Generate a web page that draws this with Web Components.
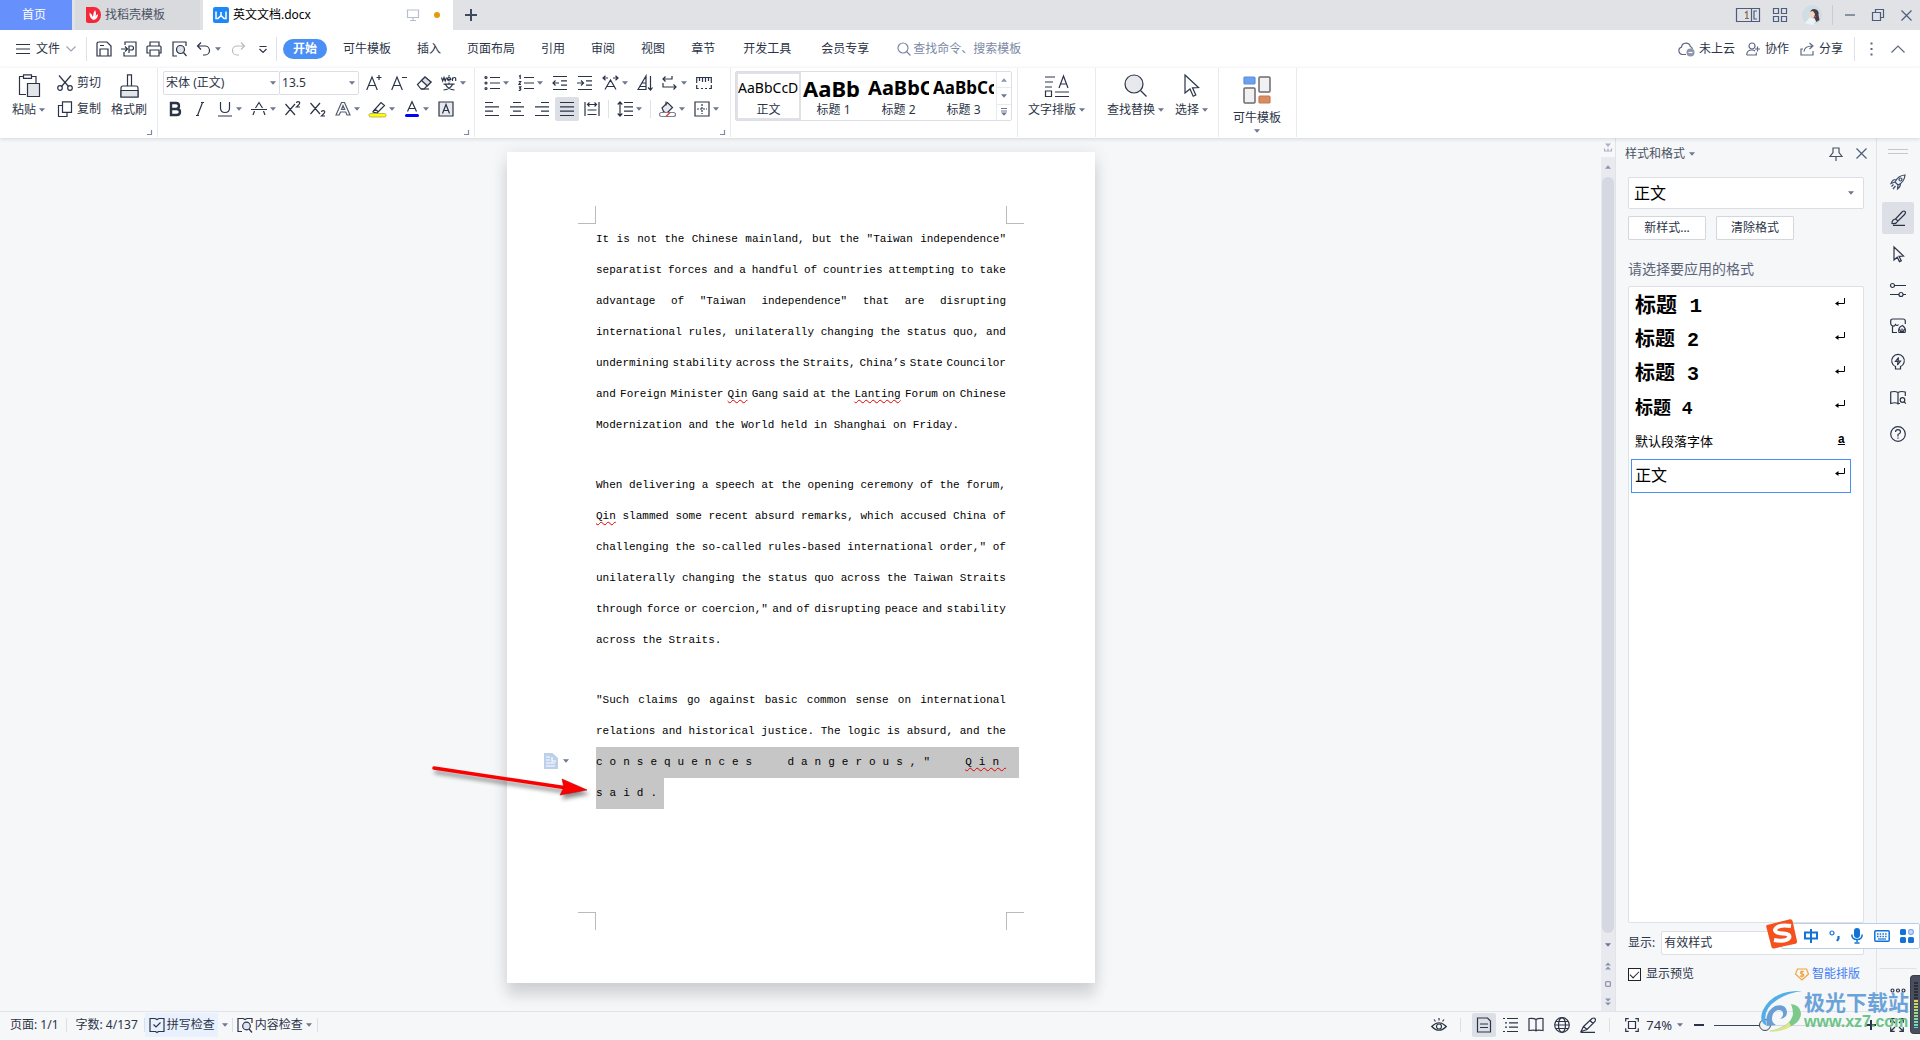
<!DOCTYPE html>
<html lang="zh-CN">
<head>
<meta charset="utf-8">
<title>英文文档.docx</title>
<style>
html, body { margin: 0; height: 100%; overflow: hidden; }
body { font: 12px/16px "Noto Sans", "Noto Sans CJK SC", sans-serif; color: #2b3447; background: #f6f7f9; }
</style>
</head>
<body>
<writer-app></writer-app>
<script>
const BASE = `
*{box-sizing:border-box}
button,select,input{font:inherit;color:inherit;margin:0}
button{background:none;border:0;padding:0;display:flex;align-items:center;white-space:nowrap;cursor:pointer}
select{appearance:none;background:none;border:0;outline:0}
a{color:inherit;text-decoration:none}
`;
function define(name, css, html, setup) {
  const tpl = document.createElement('template');
  tpl.innerHTML = `<style>${BASE}${css}</style>${html}`;
  customElements.define(name, class extends HTMLElement {
    constructor() { super(); this.attachShadow({ mode: 'open' }); }
    connectedCallback() {
      if (this.shadowRoot.childNodes.length) return;
      this.shadowRoot.append(tpl.content.cloneNode(true));
      if (setup) setup.call(this, this.shadowRoot);
    }
  });
}

/* name: [width, height, svg body] */
const ICONS = {
  caret: [6, 4, '<path d="M0 .3h6L3 3.700z" fill="#6b7790" stroke="none"/>'],
  caretUp: [6, 4, '<path d="M0 3.700h6L3 .3z" fill="#8a94ab" stroke="none"/>'],
  menu: [14, 12, '<path d="M0 1.500h14M0 6h14M0 10.500h14"/>'],
  chevDown: [10, 6, '<path d="M.5.5L5 5 9.500.5" stroke="#9aa3b4"/>'],
  chevUp: [14, 8, '<path d="M.5 7.500L7 1l6.500 6.500" stroke="#5d6880"/>'],
  more: [3, 14, '<path d="M.5 1.500h2M.5 7h2M.5 12.500h2" stroke="#5d6880" stroke-width="2"/>'],
  save: [16, 16, '<path d="M1 3q0-2 2-2h8l4 4v10H1zM4 15V8h8v7M4 4.500h4"/>'],
  exportPdf: [16, 16, '<path d="M4 4V1h11v14H3v-4M0 8h6M4 5.500L6.500 8 4 10.500M8 12V5h2.500q2 0 2 2t-2 2H8"/>'],
  print: [16, 16, '<path d="M4 5V1h9v4M3 12H1V6q0-1 1-1h12q1 0 1 1v6h-2M4 9h9v6H4z"/>'],
  preview: [16, 16, '<path d="M15 5V1H2v14h4"/><circle cx="9.500" cy="8.500" r="4" fill="#dfe3ea"/><path d="M12.500 11.500L15.500 15"/>'],
  undo: [16, 16, '<path d="M5 1.500L1.500 5 5 8.500M1.500 5h7.500a4.500 4.500 0 0 1 0 9H7"/>'],
  redo: [16, 16, '<path d="M11 1.500L14.500 5 11 8.500M14.500 5H7a4.500 4.500 0 0 0 0 9h2" stroke="#b6bac3"/>'],
  quick: [16, 16, '<path d="M4.500 5.500h7M4.500 8L8 11.500 11.500 8"/>'],
  search: [14, 14, '<circle cx="6" cy="6" r="5" stroke="#7c88a6"/><path d="M9.500 9.500L13.500 13.500" stroke="#7c88a6"/>'],
  cloud: [17, 15, '<path d="M8 12.500H4.500a3.800 3.800 0 0 1-1-7.400 4.500 4.500 0 0 1 8.800-.6 3 3 0 0 1 2 2.500" stroke="#5d6880"/><circle cx="12.500" cy="10.500" r="4" fill="#8d96ab" stroke="none"/><path d="M10.500 10.500h4" stroke="#fff"/>'],
  person: [15, 14, '<circle cx="6" cy="4" r="3" stroke="#5d6880"/><path d="M.7 13q0-5 5.300-5 2 0 3 1M.7 13h9.600v-2.500M11.500 4.500v5M9 7h5" stroke="#5d6880"/>'],
  share: [15, 14, '<path d="M3 7H1v6h12V9M4 9.500q.5-5.500 8-5.500M9.500 1L13 4 9.500 7" stroke="#5d6880"/>'],
  plus: [12, 12, '<path d="M6 0v12M0 6h12" stroke="#3f4a60" stroke-width="2"/>'],
  monitor: [12, 12, '<path d="M.5 1h11v7.500H.5zM6 8.500v3M3 11.500h6" stroke="#b7bed0"/>'],
  winNum: [24, 14, '<path d="M.5.5h23v13H.5zM15.500.5v13M21 3h-3v8h3" stroke="#4c5c7c"/><path d="M9 5l2-1.500v7M9 10.500h4" stroke="#8a6a4a"/>'],
  grid4: [14, 14, '<path d="M.5.5h5v5h-5zM8.500.5h5v5h-5zM.5 8.500h5v5h-5zM8.500 8.500h5v5h-5z" stroke="#4c5c7c"/>'],
  avatar: [20, 20, '<circle cx="10" cy="10" r="10" fill="#cfdde4" stroke="none"/><path d="M8 9q0-5 4.500-5 5 1 4 6l1 5-3 2-2-4-4-1z" fill="#4b3a42" stroke="none"/><path d="M7 8q1-2 4-2l2 3q0 3-2 4l-4-1z" fill="#f0d5c8" stroke="none"/><path d="M3 18l5-6 5 3-1 5q-5 0-9-2z" fill="#eaf4f6" stroke="none"/><path d="M12 11l2 1" stroke="#c4574c"/>'],
  min: [10, 10, '<path d="M0 5h10" stroke="#4c5c7c"/>'],
  restore: [12, 12, '<path d="M.5 3.500h8v8h-8zM3.500 3.500v-3h8v8h-3" stroke="#4c5c7c"/>'],
  close: [11, 11, '<path d="M.5.5l10 10M10.500.5l-10 10" stroke="#4c5c7c"/>'],
  flame: [15, 16, '<path d="M0 0h8a7 8 0 0 1 0 16H2q-2 0-2-2z" fill="#f5283a" stroke="none"/><path d="M7.500 13Q3 11 3.500 5.500 6 7 7 10 7 6 9 3q2 4 0 7 1-2 3-3 0 5-4.500 6z" fill="#fff" stroke="none"/>'],
  wps: [16, 16, '<rect width="16" height="16" rx="2" fill="#1e88f7" stroke="none"/><path d="M3 4.500v7h2L8 8.500l3 3h2v-7M8 5v4" stroke="#fff" stroke-width="1.500"/>'],
  paste: [22, 24, '<path d="M8 20.500H1.500v-18H5M14 2.500h4V9"/><path d="M5.500.8h8v3.500h-8z"/><path d="M9.500 9.500h12v13h-12z" fill="#e2e5ea"/>'],
  cut: [16, 16, '<path d="M2 .5l9.500 11M14 .5L4.500 11.500"/><circle cx="3" cy="13" r="2.300"/><circle cx="13" cy="13" r="2.300"/>'],
  copy: [16, 16, '<path d="M5.500.8h9v10.500h-9z"/><path d="M5.500 4.500h-4v11h8.500v-4"/>'],
  brush: [19, 24, '<path d="M7.500 12V.8h4V12M1 23V14q0-2 2-2h13q2 0 2 2v9z"/><path d="M1 16.500h17V23H1z" fill="#e2e5ea"/>'],
  grow: [16, 16, '<path d="M.7 15L6 2l5.300 13M2.500 10.500h7M13 0v5M10.500 2.500h5"/>'],
  shrink: [16, 16, '<path d="M.7 15L6 2l5.300 13M2.500 10.500h7M11 2.500h5"/>'],
  eraser: [16, 16, '<path d="M1.500 9.500L9 2l6 5-7 7H5z"/><path d="M5.500 5.500L9 2l6 5-3.800 3.800z" fill="#dcdfe5"/><path d="M5 14h8"/>'],
  sup: [16, 16, '<path d="M.5 3l9.500 11M10 3L.5 14M11.500 2q0-1.300 1.600-1.300T14.700 2q0 1-3.200 4H15"/>'],
  sub: [16, 16, '<path d="M.5 2L10 13M10 2L.5 13M11.500 11q0-1.300 1.600-1.300T14.700 11q0 1-3.200 4H15"/>'],
  pinyin: [16, 16, '<path d="M.5 2.500L1.700 6 3 2.500 4.200 6 5.500 2.500M6.500 4.300h3.300Q9.600 2.500 8 2.500T6.500 4.300Q6.700 6 9.500 6M8.500.3l-1 1.200M11.500 6V2.500M11.500 3.500q3-2 3.200 0V6M2.500 9.200h11M8 7.500v1.700M4.500 9.500Q7 14.500 13.500 15M11.500 9.500Q9 14.500 2.500 15"/>'],
  bold: [16, 16, '<path d="M4 2h5q3 0 3 3t-3 3H4zM4 8h5.500q3.500 0 3.500 3t-3.500 3H4z" stroke-width="2.400"/>'],
  italic: [16, 16, '<path d="M9 1.500h3M4 14.500h3M10.500 1.500l-5 13"/>'],
  under: [16, 16, '<path d="M3.500 1v6q0 4.500 4.500 4.500T12.500 7V1M1 15h14"/>'],
  strike: [16, 16, '<path d="M4.500 7L8 1.500 11.500 7M3.500 10L2 14M12.500 10l1.500 4M0 8.500h16"/>'],
  outlineA: [16, 16, '<path d="M1 14L6.500 1.500h3L15 14h-3l-1.300-3H5.500L4.200 14zM6.500 8.500h3.200L8 4.500z" stroke="#555d6d"/>'],
  marker: [17, 16, '<path d="M4 10.500L12 1.500l3.500 3L8 12 4 11zM6 8l3.500 3"/><rect x="0" y="12.500" width="17" height="3.500" rx="1.500" fill="#ffff00" stroke="#8b8b4d" stroke-width=".6"/>'],
  colorA: [16, 16, '<path d="M3.500 10.500L8 .8l4.500 9.700M5 7.500h6"/><rect x="1" y="13" width="14" height="3" rx="1.500" fill="#0000ff" stroke="none"/>'],
  boxA: [16, 16, '<path d="M1 1h14v14H1z" fill="#e7e9ed"/><path d="M4.500 12.500L8 3.500l3.500 9M5.500 9.500h5"/>'],
  bullets: [16, 16, '<path d="M6 2.500h10M6 8h10M6 13.500h10"/><circle cx="2" cy="2.500" r="1"/><circle cx="2" cy="8" r="1"/><circle cx="2" cy="13.500" r="1"/>'],
  numbers: [16, 16, '<path d="M6 2.500h10M6 8h10M6 13.500h10M1 1.200L2.200.5V4M.7 6.500h2L1 9.300h2M.8 11.800h2L1.800 13.300l1 .8-.8 1.200H.7"/>'],
  outdent: [16, 16, '<path d="M1 1.500h14M9 5.800h6M9 10.200h6M1 14.500h14M1 8h6M3.500 5.500L1 8l2.500 2.500"/>'],
  indent: [16, 16, '<path d="M1 1.500h14M9 5.800h6M9 10.200h6M1 14.500h14M0 8h6M4 5.500L6.500 8 4 10.500"/>'],
  scale: [17, 16, '<path d="M3 14.500L8.500 5l5.500 9.500M5 11.500h7M1 3h5M3.500.7L1 3l2.500 2.300M11 3h5M13.500.7L16 3l-2.500 2.300"/>'],
  sort: [16, 16, '<path d="M1 14.500L9 1v13.500zM5 8h4M3 11.500h6M13.500 1v14M11 12.500l2.500 2.500 2-2.500"/>'],
  wrap: [16, 16, '<path d="M10 1v3H1M3.500 1.500L1 4l2.500 2.500M1 8v4h13M11.500 9.500L14 12l-2.500 2.500"/>'],
  ruler: [16, 16, '<path d="M.7 8V2.500h14.600V8M3.500 3v3M6.500 3v4M9.500 3v4M12.500 3v3M.7 10v3.500h2M5 13.500h2M9 13.500h2M13 13.500h2.300V10"/>'],
  alignL: [16, 16, '<path d="M1 1.500h8M1 5.800h14M1 10.200h8M1 14.500h14"/>'],
  alignC: [16, 16, '<path d="M4 1.500h8M1 5.800h14M4 10.200h8M1 14.500h14"/>'],
  alignR: [16, 16, '<path d="M7 1.500h8M1 5.800h14M7 10.200h8M1 14.500h14"/>'],
  alignJ: [16, 16, '<path d="M1 1.500h14M1 5.800h14M1 10.200h14M1 14.500h14"/>'],
  alignD: [16, 16, '<path d="M1 1v14M15 1v14M4 3.500h8M5.500 1.500L3.500 3.500l2 2M10.500 1.500l2 2-2 2M3.500 9h9M3.500 13.500h9"/>'],
  spacing: [16, 16, '<path d="M7 1.500h9M7 5.800h9M7 10.200h9M7 14.500h9M3 1v14M.7 3.500L3 1l2.300 2.500M.7 12.500L3 15l2.300-2.500"/>'],
  bucket: [17, 16, '<path d="M3 7l5.500-5.500 5 5-5 5q-2 1-4-1z" fill="#e7e9ed"/><path d="M7 .5v4"/><rect x=".5" y="11.500" width="16" height="4" rx="2" fill="#fff" stroke="#7a8192"/><path d="M7 15.500l4-4" stroke="#e04040" stroke-width="1.500"/>'],
  border: [16, 16, '<path d="M1 1h14v14H1z"/><path d="M8 3v10M3 8h10" stroke-dasharray="2 1"/>'],
  typeset: [26, 24, '<path d="M1 3h10M1 8h8M1 13h7M15 14l4.500-12L24 14M16.500 10h6M11 18h14M11 22.500h14M1.500 17h6v5.500h-6z"/>'],
  find: [24, 24, '<circle cx="10" cy="10" r="9" fill="#e7e9ed"/><path d="M16.500 16.500l6 6"/>'],
  arrow: [16, 24, '<path d="M1 1l13.500 12.500-6 .3 3.300 7.200-2.600 1.300L6 15l-5 4z"/>'],
  tiles: [28, 28, '<rect x="1" y="1" width="11" height="7" rx="1" fill="#6aa0ee" stroke="#5a8fdc"/><rect x="16" y="1" width="11" height="15" rx="1" fill="#f1f1f2" stroke="#6b6b6e" stroke-width="1.500"/><rect x="1" y="12" width="11" height="15" rx="1" fill="#f1f1f2" stroke="#6b6b6e" stroke-width="1.500"/><rect x="16" y="20" width="11" height="7" rx="1" fill="#d88c62" stroke="#c57850"/>'],
  corner: [5, 5, '<path d="M4.500 0v4.500H0" stroke="#7c88a6"/>'],
  stack: [6, 8, '<path d="M0 .5h6M0 3h6" stroke="#6b7790"/><path d="M0 4.500h6L3 7.700z" fill="#6b7790" stroke="none"/>'],
  pin: [14, 14, '<path d="M4 1h6v4.500l3 4H1l3-4zM7 9.500V14"/>'],
  handle: [20, 5, '<path d="M0 .5h20M0 4.500h20" stroke="#c3c7d0"/>'],
  rocket: [16, 16, '<path d="M5 8Q8 1.500 15 1q-.5 7-7 10L5 8zM5.500 5.500Q2.500 5.500 1 9.500L5 8M10.500 9.500Q10.500 13 7.500 15L8 11M3.500 10.500l-2 2M5.500 12L3 15" stroke="#3f4d6b"/><circle cx="10.500" cy="5.500" r="1.500" stroke="#3f4d6b"/>'],
  pen: [16, 16, '<path d="M5.500 9L12.500 1.500q1.500-1 2.500 0t0 2.500L8 11zM5.500 9Q2 9.500 2 13.500q4 1 6-2.500M3 15.300h12"/>'],
  pointer: [16, 16, '<path d="M4 1l9.500 9-4.500.3 2.300 4.400-1.800.9-2.300-4.400L4 14z"/>'],
  sliders: [16, 16, '<circle cx="2.500" cy="3.500" r="2"/><path d="M4.500 3.500H16M0 12.500h9M13 12.500h3"/><circle cx="11" cy="12.500" r="2"/>'],
  store: [16, 16, '<path d="M7 14.500H2.500V8Q.7 7 .7 5.500V3Q.7 1 3 1h10q2.300 0 2.300 2v3M2.500 8q2 .5 3-1.500 1.500 2 3 0M9 14.500q-1.500-5 3.500-7 4 3 2.500 7z"/><path d="M12 14V10.500M9.500 11q1 3 2.500 3.500M14.500 11q-1 3-2.500 3.500"/>'],
  bulb: [16, 16, '<path d="M5.500 12.500A6.300 6.300 0 1 1 10.500 12.500V15h-5zM8.500 3.500L5.500 7.500H8L7.500 11l3-4H8z"/>'],
  bookSearch: [16, 16, '<path d="M8 2.500v12M8 13.500Q5 12 .7 13.500V2Q5 .8 8 2.500 11 .8 15.300 2v4M8 13.500h2"/><circle cx="12.500" cy="10" r="2.300"/><path d="M14 11.700l1.800 2"/>'],
  help: [16, 16, '<circle cx="8" cy="8" r="7.300"/><path d="M5.500 6Q5.500 3.700 8 3.700T10.500 6Q10.500 7.300 8 8.500v2M8 11.500v1.300"/>'],
  dots: [16, 5, '<circle cx="2.500" cy="2.500" r="1.500"/><circle cx="8" cy="2.500" r="1.500"/><circle cx="13.500" cy="2.500" r="1.500"/>'],
  ret: [10, 9, '<path d="M9.500 0v5.500H2" stroke="#000" stroke-width="1"/><path d="M3.500 3v5L0 5.500z" fill="#000" stroke="none"/>'],
  badge: [14, 14, '<path d="M2.500 2h9l2 5-6.500 6L.5 7z" stroke="#f0a63c"/><path d="M9 4.500H6q-1 1.300 0 2l2.500.7q.8 1.300-.5 2H5M7 3.500v7" stroke="#f0a63c"/>'],
  spell: [16, 16, '<path d="M6 1.500H1v13h5.500l1.500 1 1.500-1H15v-13h-5l-2 1zM4.500 7.500L7 10l4.500-4.500"/>'],
  content: [16, 16, '<path d="M4 14.500H1v-13h5l2 1 2-1h5V6"/><circle cx="9.500" cy="9" r="3.800" fill="#dfe3ea"/><path d="M12 12l3 3.500M4 14.500h1"/>'],
  eye: [16, 16, '<path d="M.7 9.500Q8 2 15.300 9.500 8 17 .7 9.500zM8 1v2.500M3 2.500L4.500 4.500M13 2.500L11.500 4.500"/><circle cx="8" cy="9.500" r="2.500"/>'],
  pageView: [16, 16, '<path d="M1.500 1h10l3 3v11h-13zM4 7h8M4 10.500h8"/>'],
  outline: [16, 16, '<path d="M1 1.500h2M5 1.500h11M3 5.800h2M7 5.800h9M3 10.200h2M7 10.200h9M1 14.500h2M5 14.500h11"/>'],
  book: [16, 16, '<path d="M8 2v12.500M8 13.500Q7 12.800 1 13.500v-12Q6 1 8 2.500 10 1 15 1.500v12Q9 12.800 8 13.500"/>'],
  globe: [16, 16, '<circle cx="8" cy="8" r="7.300"/><ellipse cx="8" cy="8" rx="3.500" ry="7.300"/><path d="M1 8h14M2 4.500h12M2 11.500h12"/>'],
  quill: [16, 16, '<path d="M3.500 9.500L12 1.500q2-1 3 0t0 3L7 12.500zM3.500 9.500L1 14.500l6-2M10 3.500L13 6.500M1 15.300h14"/>'],
  fit: [14, 14, '<path d="M.7 3.500V.7h3M10.300.7h3v3M13.300 10.300v3h-3M3.700 13.300h-3v-3M3.500 3.500h7v7h-7z"/>'],
  minus: [10, 10, '<path d="M0 5h10" stroke-width="2"/>'],
  plusS: [10, 10, '<path d="M0 5h10M5 0v10" stroke-width="2"/>'],
  full: [14, 14, '<path d="M.7 4.500V.7h4M9.300.7h4v4M13.300 9.300v4h-4M4.700 13.300h-4v-4M1 1l4 4M13 1L9 5M1 13l4-4M13 13L9 9"/>'],
  pasteTag: [14, 16, '<path d="M0 0h8.500L14 5v11H0z" fill="#bccfeb" stroke="none"/><path d="M2 4h4M2 7h4M8 4v4h4M2 10h9M2 13h9" stroke="#fff"/>'],
  pageTop: [8, 9, '<path d="M1 .5h6L4 4z" fill="#aab1c2" stroke="none"/><path d="M0 8h8M.5 5.500v2M7.500 5.500v2M4 5.500v2" stroke="#aab1c2"/>'],
  dblUp: [6, 8, '<path d="M0 3.500h6L3 .5zM0 7.500h6L3 4.500z" fill="#8a94ab" stroke="none"/>'],
  dblDown: [6, 8, '<path d="M0 .5h6L3 3.500zM0 4.500h6L3 7.500z" fill="#8a94ab" stroke="none"/>'],
  ring: [6, 6, '<rect x=".6" y=".6" width="4.800" height="4.800" rx="1" stroke="#8a94ab"/>'],
  sogou: [32, 30, '<path d="M1 6L24 .3q2-.3 2.500 1.500L31 22q.5 2-1.500 2.700L8 29.500q-2 .3-2.500-1.500L.3 8Q0 6.500 1 6z" fill="#f4511e" stroke="none"/><path d="M25 7Q11 5 9 11q0 3 8 3.500t6 4.500Q20 23 8 21" stroke="#fff" stroke-width="4"/>'],
  zhong: [14, 14, '<path d="M1 3.500h12v6H1zM7 0v14" stroke="#1272d6" stroke-width="2"/>'],
  punct: [12, 12, '<circle cx="3" cy="3" r="2" stroke="#1272d6"/><path d="M9.500 6v2.500L8 11" stroke="#1272d6" stroke-width="2.200"/>'],
  mic: [12, 16, '<rect x="3" y="0" width="6" height="10" rx="3" fill="#1272d6" stroke="none"/><path d="M.8 6.500q0 5 5.200 5t5.200-5M6 11.500V14M3.500 15h5" stroke="#1272d6" stroke-width="1.500"/>'],
  keys: [16, 12, '<rect x=".8" y=".8" width="14.400" height="10.400" rx="1" stroke="#1272d6" stroke-width="1.500"/><path d="M3 4h10M3 6.500h10" stroke="#1272d6" stroke-width="1.500" stroke-dasharray="1.500 1.200"/><path d="M4 9h8" stroke="#1272d6"/>'],
  apps: [14, 14, '<rect width="6" height="6" rx="1.500" fill="#1272d6" stroke="none"/><rect x="8.700" y=".7" width="4.600" height="4.600" rx="1.500" fill="#cdd9f6" stroke="#7aa5ea"/><rect y="8" width="6" height="6" rx="1.500" fill="#1272d6" stroke="none"/><rect x="8" y="8" width="6" height="6" rx="1.500" fill="#1272d6" stroke="none"/>'],
  swirl: [42, 42, '<path d="M41 1Q12 0 2 20-3 32 6 36 0 20 16 10 26 3 41 1z" fill="#54aee6" stroke="none"/><path d="M6 36Q3 22 14 16q11-3 12 6 0 6-7 7 5-4 2-8-5-3-9 3-3 8 3 11z" fill="#6a9fd6" stroke="none"/><path d="M30 14q9 1 10 9 0 10-14 15-10 4-18 3 22-4 24-17 0-5-2-10z" fill="#7cc98c" stroke="none"/><path d="M8 41q14-2 20-9l2 4Q20 43 8 41z" fill="#dfe58a" stroke="none"/>'],
  redArrow: [160, 36, '<g style="filter:drop-shadow(2px 4px 2px rgba(0,0,0,.45))"><path d="M2 3L132 22.500" stroke="#fa0000" stroke-width="3.500" stroke-linecap="round"/><path d="M130 14L155 25 128 30 132 22.500z" fill="#fa0000" stroke="#c80000" stroke-width=".6"/></g>'],
};
define('ui-icon', ':host{display:inline-flex;flex:none}svg{display:block;overflow:visible}', '', function (root) {
  const [w, h, body] = ICONS[this.getAttribute('name')];
  root.innerHTML += `<svg width="${w}" height="${h}" viewBox="0 0 ${w} ${h}" fill="none" stroke="currentColor" stroke-width="1.200" aria-hidden="true">${body}</svg>`;
});

/* small ribbon button: icon, optional label in the slot, optional caret */
define('tool-btn', `
:host{display:block}
button{gap:3px;height:24px}
:host([wide]) button{gap:4px}
:host([on]) button{background:#dce0e6;margin:0 -4px;padding:0 4px;border-radius:2px}
`, '<button type="button"></button>', function (root) {
  const b = root.querySelector('button');
  b.setAttribute('aria-label', this.getAttribute('icon'));
  b.innerHTML = `<ui-icon name="${this.getAttribute('icon')}"></ui-icon>` +
    (this.textContent.trim() ? '<slot></slot>' : '') + (this.hasAttribute('menu') ? '<ui-icon name="caret"></ui-icon>' : '');
  if (this.textContent.trim()) b.removeAttribute('aria-label');
});
/* tall ribbon button: icon above its label */
define('big-btn', `
:host{display:block}
button{flex-direction:column;padding-top:3px;gap:4px}
.l{display:flex;align-items:center;gap:3px}
:host([stack]) button{padding-top:5px;gap:6px}
:host([stack]) .l{flex-direction:column}
`, '<button type="button"></button>', function (root) {
  root.querySelector('button').innerHTML = `<ui-icon name="${this.getAttribute('icon')}"></ui-icon><span class="l"><slot></slot>` +
    (this.hasAttribute('menu') ? '<ui-icon name="caret"></ui-icon>' : '') + '</span>';
});
define('ribbon-group', `
:host{display:flex;position:relative;padding:3px 10px 0;border-right:1px solid #e9eaed;height:69px}
.corner{position:absolute;right:5px;bottom:2px}
:host(:not([launcher])) .corner{display:none}
`, '<slot></slot><button class="corner" aria-label="更多设置"><ui-icon name="corner"></ui-icon></button>');

define('combo-box', `
:host{display:grid;align-items:center;background:#fff;border:1px solid #dcdee3;border-radius:2px}
select{grid-area:1/1;width:100%;height:100%;padding:0 16px 0 var(--pad,2px)}
ui-icon{grid-area:1/1;justify-self:end;margin-right:var(--caret,3px);pointer-events:none}
`, '<select></select><ui-icon name="caret"></ui-icon>', function (root) {
  const s = root.querySelector('select');
  s.setAttribute('aria-label', this.getAttribute('label'));
  s.innerHTML = `<option>${this.getAttribute('value')}</option>`;
  if (this.hasAttribute('nocaret')) root.querySelector('ui-icon').remove();
});

define('title-bar', `
:host{display:flex;height:30px;background:#e1e2e6;align-items:center}
.home,.tab{display:flex;align-items:center;height:30px}
.home{width:72px;justify-content:center;background:#6691fd;color:#fff;margin-right:3px;padding-right:4px}
.tab{width:125px;padding-left:11px;gap:4px;background:#d9dade;color:#4a5263;margin-right:3px}
.cur{width:250px;padding:0 13px 0 10px;background:#fff;color:#000;margin:0;gap:4px}
.cur ui-icon[name=monitor]{margin-left:auto;margin-right:11px}
.dot{width:6px;height:6px;border-radius:3px;background:#e49a0a}
.add{margin-left:12px}
.r{margin-left:auto;display:flex;align-items:center;padding-right:8px}
.r button{justify-content:center}
.sep{width:1px;height:20px;background:#c9ccd3;margin:0 12px 0 10px}
`, `
<a class="home" href="#">首页</a>
<a class="tab" href="#"><ui-icon name="flame"></ui-icon>找稻壳模板</a>
<a class="tab cur" href="#"><ui-icon name="wps"></ui-icon>英文文档.docx<ui-icon name="monitor"></ui-icon><i class="dot"></i></a>
<button class="add" aria-label="新建"><ui-icon name="plus"></ui-icon></button>
<div class="r">
<button aria-label="窗口" style="margin-right:13px"><ui-icon name="winNum"></ui-icon></button>
<button aria-label="应用" style="margin-right:15px"><ui-icon name="grid4"></ui-icon></button>
<button aria-label="账户"><ui-icon name="avatar"></ui-icon></button><i class="sep"></i>
<button aria-label="最小化" style="margin-right:17px"><ui-icon name="min"></ui-icon></button>
<button aria-label="还原" style="margin-right:17px"><ui-icon name="restore"></ui-icon></button>
<button aria-label="关闭"><ui-icon name="close"></ui-icon></button>
</div>`);

define('menu-bar', `
:host{display:flex;height:38px;align-items:center;background:#fff;padding:0 15px 0 16px}
.file{gap:6px}
.sep{width:1px;height:24px;background:#dfe1e6}
.quick{display:flex;gap:9px;padding:0 5px 0 9px}
nav{display:flex;align-items:center;gap:26px;padding-left:6px}
.on{background:#4a8ff5;color:#fff;font-weight:bold;border-radius:10px;height:20px;line-height:20px;padding:0 10px;margin-right:-10px}
.wide{padding:0 2px}
.find{display:flex;align-items:center;gap:2px;margin-left:26px}
.find input{border:0;outline:0;width:120px;padding:0;background:none}
.find input::placeholder{color:#7c88a6;opacity:1}
.r{margin-left:auto;display:flex;align-items:center;gap:11px}
.r button{gap:4px}
`, `
<button class="file"><ui-icon name="menu"></ui-icon>文件<ui-icon name="chevDown"></ui-icon></button>
<i class="sep" style="margin-left:10px"></i>
<div class="quick"><tool-btn icon="save"></tool-btn><tool-btn icon="exportPdf"></tool-btn><tool-btn icon="print"></tool-btn><tool-btn icon="preview"></tool-btn><tool-btn icon="undo" menu></tool-btn><tool-btn icon="redo"></tool-btn><tool-btn icon="quick"></tool-btn></div>
<i class="sep"></i>
<nav><a class="on" href="#">开始</a><a href="#">可牛模板</a><a href="#">插入</a><a href="#">页面布局</a><a href="#">引用</a><a href="#">审阅</a><a href="#">视图</a><a href="#">章节</a><a class="wide" href="#">开发工具</a><a class="wide" href="#">会员专享</a></nav>
<label class="find"><ui-icon name="search"></ui-icon><input placeholder="查找命令、搜索模板" aria-label="查找命令、搜索模板"></label>
<div class="r"><button><ui-icon name="cloud"></ui-icon>未上云</button><button><ui-icon name="person"></ui-icon>协作</button><button><ui-icon name="share"></ui-icon>分享</button><i class="sep"></i>
<button aria-label="更多" style="margin:0 7px 0 4px"><ui-icon name="more"></ui-icon></button><button aria-label="收起"><ui-icon name="chevUp"></ui-icon></button></div>`);

define('style-card', `
:host{display:block;width:65px}
button{flex-direction:column;width:100%;height:48px;border:2px solid transparent;overflow:hidden}
:host([on]) button{border-color:#dfe1e6}
b{display:block;width:100%;height:28px;line-height:28px;overflow:hidden;color:#000;font-size:var(--fs);text-align:left;font-weight:var(--fw,bold)}
`, '<button type="button"><b></b><slot></slot></button>', function (root) {
  root.querySelector('b').textContent = this.getAttribute('sample');
});

define('ribbon-bar', `
:host{display:flex;height:70px;background:#fff;box-shadow:0 1px 4px rgba(40,50,70,.16);position:relative;z-index:1}
.col{display:flex;flex-direction:column;gap:2px}
.row{display:flex;gap:9px;height:24px;align-items:center}
.sep{width:1px;height:18px;background:#dfe1e6;margin:0 -1px}
.fonts{display:flex;margin-right:-2px}
.gal{display:flex;width:277px;height:50px;border:1px solid #dcdee3;border-radius:2px}
.scr{display:flex;flex-direction:column;width:15px;margin-left:auto;border-left:1px solid #e9eaed}
.scr button{flex:1;justify-content:center}
.scr button+button{border-top:1px solid #e9eaed}
`, `
<ribbon-group launcher style="padding-left:12px">
<big-btn icon="paste" menu>粘贴</big-btn>
<div class="col" style="margin:0 10px 0 12px"><tool-btn wide icon="cut">剪切</tool-btn><tool-btn wide icon="copy">复制</tool-btn></div>
<big-btn icon="brush">格式刷</big-btn>
</ribbon-group>
<ribbon-group launcher style="padding-left:5px;padding-right:8px"><div class="col">
<div class="row"><div class="fonts"><combo-box label="字体" value="宋体 (正文)" style="width:117px;height:24px;margin-right:-1px"></combo-box><combo-box label="字号" value="13.5" style="width:80px;height:24px"></combo-box></div><tool-btn icon="grow"></tool-btn><tool-btn icon="shrink"></tool-btn><tool-btn icon="eraser"></tool-btn><tool-btn icon="pinyin" menu></tool-btn></div>
<div class="row" style="padding-left:4px"><tool-btn icon="bold"></tool-btn><tool-btn icon="italic"></tool-btn><tool-btn icon="under" menu></tool-btn><tool-btn icon="strike" menu></tool-btn><tool-btn icon="sup"></tool-btn><tool-btn icon="sub"></tool-btn><tool-btn icon="outlineA" menu></tool-btn><tool-btn icon="marker" menu></tool-btn><tool-btn icon="colorA" menu></tool-btn><tool-btn icon="boxA"></tool-btn></div>
</div></ribbon-group>
<ribbon-group launcher style="padding-left:9px;padding-right:11px"><div class="col">
<div class="row"><tool-btn icon="bullets" menu></tool-btn><tool-btn icon="numbers" menu></tool-btn><tool-btn icon="outdent"></tool-btn><tool-btn icon="indent"></tool-btn><tool-btn icon="scale" menu></tool-btn><tool-btn icon="sort"></tool-btn><tool-btn icon="wrap" menu></tool-btn><tool-btn icon="ruler"></tool-btn></div>
<div class="row"><tool-btn icon="alignL"></tool-btn><tool-btn icon="alignC"></tool-btn><tool-btn icon="alignR"></tool-btn><tool-btn icon="alignJ" on></tool-btn><tool-btn icon="alignD"></tool-btn><i class="sep"></i><tool-btn icon="spacing" menu></tool-btn><i class="sep"></i><tool-btn icon="bucket" menu></tool-btn><tool-btn icon="border" menu></tool-btn></div>
</div></ribbon-group>
<ribbon-group style="padding-left:4px;padding-right:5px"><div class="gal">
<style-card on sample="AaBbCcD" style="--fs:14px;--fw:400">正文</style-card><style-card sample="AaBb" style="--fs:22px">标题 1</style-card><style-card sample="AaBbC" style="--fs:20px">标题 2</style-card><style-card sample="AaBbCc" style="--fs:17px">标题 3</style-card>
<div class="scr"><button aria-label="上"><ui-icon name="caretUp"></ui-icon></button><button aria-label="下"><ui-icon name="caret"></ui-icon></button><button aria-label="展开"><ui-icon name="stack"></ui-icon></button></div>
</div></ribbon-group>
<ribbon-group><big-btn icon="typeset" menu>文字排版</big-btn></ribbon-group>
<ribbon-group style="padding-left:11px;gap:11px"><big-btn icon="find" menu>查找替换</big-btn><big-btn icon="arrow" menu>选择</big-btn></ribbon-group>
<ribbon-group style="padding-left:14px;padding-right:15px"><big-btn icon="tiles" menu stack>可牛模板</big-btn></ribbon-group>`);

/* one justified line of the document; *word* marks a spelling mistake */
define('doc-line', `
:host{display:flex;justify-content:space-between;height:31px;line-height:31px;white-space:pre}
:host([loose]){display:block}
:host([sel]){letter-spacing:7px;background:#c6c6c6}
:host([sel]:not([loose])){margin-right:-13px;padding-right:13px}
:host([sel][loose]){width:max-content}
u{text-decoration:underline wavy #e00000 1px;text-underline-offset:2px}
`, '', function (root) {
  const words = this.getAttribute('text').replace(/\*(\S+?)\*/g, '<u>$1</u>').split(' ');
  root.innerHTML += this.hasAttribute('loose') ? `<span>${words.join(' ')}</span>` : words.map(w => `<span>${w}</span>`).join(' ');
});

define('doc-page', `
:host{display:grid;grid-template:72px 1fr 71px / 89px 1fr 89px;width:588px;min-height:831px;background:#fff;box-shadow:0 14px 12px rgba(60,64,72,.13),0 2px 16px rgba(60,64,72,.14);position:relative}
.m{width:18px;height:18px;border:0 solid #b9bbbf}
.tl{grid-area:1/1;place-self:end;border-width:0 1px 1px 0}
.tr{grid-area:1/3;place-self:end start;border-width:0 0 1px 1px}
.bl{grid-area:3/1;place-self:start end;border-width:1px 1px 0 0}
.br{grid-area:3/3;place-self:start;border-width:1px 0 0 1px}
.t{grid-area:2/2;font:11px/31px "Liberation Mono","Noto Sans CJK SC",monospace;color:#000}
p{margin:0 0 29px}
.tag{position:absolute;left:37px;top:601px;gap:5px}
.arrow{position:absolute;left:-75px;top:613px}
`, `
<i class="m tl"></i><i class="m tr"></i><i class="m bl"></i><i class="m br"></i>
<div class="t">
<p>${[
'It is not the Chinese mainland, but the ″Taiwan independence″',
'separatist forces and a handful of countries attempting to take',
'advantage of ″Taiwan independence″ that are disrupting',
'international rules, unilaterally changing the status quo, and',
'undermining stability across the Straits, China’s State Councilor',
'and Foreign Minister *Qin* Gang said at the *Lanting* Forum on Chinese'].map(t => `<doc-line text="${t}"></doc-line>`).join('')}<doc-line loose text="Modernization and the World held in Shanghai on Friday."></doc-line></p>
<p>${[
'When delivering a speech at the opening ceremony of the forum,',
'*Qin* slammed some recent absurd remarks, which accused China of',
'challenging the so-called rules-based international order,″ of',
'unilaterally changing the status quo across the Taiwan Straits',
'through force or coercion,″ and of disrupting peace and stability'].map(t => `<doc-line text="${t}"></doc-line>`).join('')}<doc-line loose text="across the Straits."></doc-line></p>
<p><doc-line text="″Such claims go against basic common sense on international"></doc-line><doc-line text="relations and historical justice. The logic is absurd, and the"></doc-line><doc-line sel text="consequences dangerous,″ *Qin*"></doc-line><doc-line sel loose text="said."></doc-line></p>
</div>
<button class="tag" aria-label="粘贴选项"><ui-icon name="pasteTag"></ui-icon><ui-icon name="caret"></ui-icon></button>
<ui-icon class="arrow" name="redArrow"></ui-icon>`);

define('page-scroll', `
:host{display:flex;flex-direction:column;align-items:center;width:14px;background:#e9eaf0}
.top{width:14px;height:19px;background:#f6f7f9;display:flex;justify-content:center;align-items:center}
.thumb{flex:1;width:12px;border-radius:6px;background:#d5d8e0}
button{height:18px}
.u{height:20px}
.d{height:24px}
`, `<div class="top"><ui-icon name="pageTop"></ui-icon></div><button class="u" aria-label="上"><ui-icon name="caretUp"></ui-icon></button><div class="thumb"></div>
<button class="d" aria-label="下"><ui-icon name="caret"></ui-icon></button><button aria-label="上一页"><ui-icon name="dblUp"></ui-icon></button><button aria-label="对象"><ui-icon name="ring"></ui-icon></button><button aria-label="下一页"><ui-icon name="dblDown"></ui-icon></button>`);

define('style-item', `
:host{display:block}
button{width:100%;height:34px;padding:2px 5px 0 3px;border:1px solid transparent;justify-content:space-between;color:#000;font-family:"Liberation Mono","Noto Sans CJK SC",monospace;font-size:var(--fs);font-weight:var(--fw,bold);line-height:24px}
:host([on]) button{border-color:#4a8ff5}
.m{align-self:flex-start;margin-top:6px}
u{font:bold 12px/14px "Liberation Mono",monospace;align-self:flex-start;margin-top:5px}
`, '<button type="button"><slot></slot></button>', function (root) {
  root.querySelector('button').insertAdjacentHTML('beforeend', this.hasAttribute('char') ? '<u>a</u>' : '<ui-icon class="m" name="ret"></ui-icon>');
});

define('style-panel', `
:host{display:flex;flex-direction:column;width:262px;border:0 solid #e1e3e8;border-width:0 1px;padding:0 12px 29px}
header{display:flex;align-items:center;height:31px;margin:0 0 8px -3px;color:#4a5263}
header ui-icon{margin-left:4px}
header button{margin-left:auto}
header button+button{margin:0 -3px 0 9px}
.btns{display:flex;gap:10px;margin:7px 0 18px}
.btns button{width:78px;height:24px;border:1px solid #d3d6dd;background:#fff;justify-content:center;border-radius:1px}
h2{margin:0 0 8px;font:14px/20px "Noto Sans CJK SC",sans-serif;color:#5a6478}
.list{flex:1;background:#fff;border:1px solid #dfe1e6;border-radius:2px;padding:2px 12px 0 2px}
.show{display:flex;align-items:center;gap:6px;margin:8px 0 11px}
.foot{display:flex;align-items:center}
.foot label{display:flex;align-items:center;gap:5px}
.foot input{appearance:none;width:13px;height:13px;border:1px solid #222;background:#fff;display:grid;place-items:center}
.foot input::after{content:"";width:8px;height:4px;border:solid #222;border-width:0 0 1px 1px;transform:translateY(-1px) rotate(-45deg)}
.foot a{margin:0 4px 0 auto;display:flex;align-items:center;gap:3px;color:#3f7df6}
`, `
<header>样式和格式<ui-icon name="caret"></ui-icon><button aria-label="固定"><ui-icon name="pin"></ui-icon></button><button aria-label="关闭"><ui-icon name="close"></ui-icon></button></header>
<combo-box label="当前样式" value="正文" style="height:32px;font-size:16px;color:#000;--pad:5px;--caret:9px"></combo-box>
<div class="btns"><button>新样式...</button><button>清除格式</button></div>
<h2>请选择要应用的格式</h2>
<div class="list"><style-item style="--fs:21px">标题 1</style-item><style-item style="--fs:20px">标题 2</style-item><style-item style="--fs:20px">标题 3</style-item><style-item style="--fs:18px">标题 4</style-item><style-item char style="--fs:13px;--fw:400">默认段落字体</style-item><style-item on style="--fs:16px;--fw:400">正文</style-item></div>
<div class="show"><span>显示:</span><combo-box label="显示" value="有效样式" nocaret style="flex:1;height:24px"></combo-box></div>
<div class="foot"><label><input type="checkbox" checked>显示预览</label><a href="#"><ui-icon name="badge"></ui-icon>智能排版</a></div>`);

define('side-rail', `
:host{display:flex;flex-direction:column;align-items:center;width:43px;gap:4px;padding:11px 1px 0 0}
.h{margin-bottom:8px}
button{width:32px;height:32px;justify-content:center;border-radius:2px}
.on{background:#dce0e6}
.end{margin-top:auto;width:38px;height:43px;border-top:1px solid #dfe1e6;align-items:center}
`, `<ui-icon class="h" name="handle"></ui-icon>${['rocket', 'pen', 'pointer', 'sliders', 'store', 'bulb', 'bookSearch', 'help'].map(n =>
  `<button aria-label="${n}"${n === 'pen' ? ' class="on"' : ''}><ui-icon name="${n}"></ui-icon></button>`).join('')}<button class="end" aria-label="更多"><ui-icon name="dots"></ui-icon></button>`);

define('status-bar', `
:host{display:flex;align-items:center;height:29px;border-top:1px solid #e1e3e8;padding:0 16px 2px 10px;background:#f6f7f9}
.sep{width:1px;height:14px;background:#dcdfe5;flex:none}
.chk{gap:2px;height:24px;padding:0 3px 0 4px}
.spell{background:#e8f1fd;margin-right:4px}
.views{display:flex;margin-left:auto;align-items:center;gap:10px}
.v{height:24px}
.on{background:#dce0e6;padding:0 4px;margin:0 -4px;border-radius:2px}
input{appearance:none;width:144px;height:16px;margin:0 8px 0 10px;background:none;flex:none}
input::-webkit-slider-runnable-track{height:16px;background:linear-gradient(90deg,#3c465a 35%,#d3d6dd 35%) center/100% 1px no-repeat}
input::-webkit-slider-thumb{appearance:none;width:12px;height:12px;margin-top:2px;border:1px solid #3c465a;border-radius:6px;background:#f3f3ee}
`, `
<span>页面: 1/1</span><i class="sep" style="margin:0 9px 0 7px"></i><span>字数: 4/137</span><i class="sep" style="margin-left:6px"></i>
<button class="chk spell"><ui-icon name="spell"></ui-icon>拼写检查</button><ui-icon name="caret"></ui-icon><i class="sep" style="margin-left:4px"></i>
<button class="chk"><ui-icon name="content"></ui-icon>内容检查</button><ui-icon name="caret"></ui-icon><i class="sep" style="margin-left:5px"></i>
<div class="views"><button class="v" aria-label="护眼"><ui-icon name="eye"></ui-icon></button><i class="sep" style="margin:0 5px 0 3px"></i>
<button class="v on" aria-label="页面视图"><ui-icon name="pageView"></ui-icon></button><button class="v" aria-label="大纲"><ui-icon name="outline"></ui-icon></button><button class="v" aria-label="阅读"><ui-icon name="book"></ui-icon></button><button class="v" aria-label="网页"><ui-icon name="globe"></ui-icon></button><button class="v" aria-label="写作"><ui-icon name="quill"></ui-icon></button>
<i class="sep" style="margin:0 5px 0 3px"></i><button class="v" aria-label="适合页面"><ui-icon name="fit"></ui-icon></button></div>
<button style="gap:5px;margin:0 11px 0 7px;font-size:13px">74%<ui-icon name="caret"></ui-icon></button>
<button aria-label="缩小"><ui-icon name="minus"></ui-icon></button><input type="range" min="0" max="100" value="34" aria-label="缩放"><button aria-label="放大"><ui-icon name="plusS"></ui-icon></button>
<button aria-label="全屏" style="margin-left:14px"><ui-icon name="full"></ui-icon></button>`);

define('ime-bar', `
:host{display:flex;align-items:center;justify-content:space-between;height:26px;width:139px;padding:0 5px 0 22px;background:#fff;border:1px solid #b9d0e8;border-radius:2px}
.s{position:absolute;left:-16px;top:-5px}
`, `<ui-icon class="s" name="sogou"></ui-icon><ui-icon name="zhong"></ui-icon><ui-icon name="punct"></ui-icon><ui-icon name="mic"></ui-icon><ui-icon name="keys"></ui-icon><ui-icon name="apps"></ui-icon>`);

define('site-mark', `
:host{display:flex;gap:1px;white-space:nowrap}
b{display:block;font:bold 21px/22px "Noto Sans CJK SC",sans-serif;color:#6ba2d8}
span{display:block;font:bold 16px/20px "Liberation Sans",sans-serif;color:#6cc486}
`, '<ui-icon name="swirl"></ui-icon><div><b>极光下载站</b><span>www.xz7.com</span></div>');

define('level-meter', `
:host{display:block;width:10px;height:59px;background:#4a4f60;border:1px solid #3a3e4a;border-right:0;border-radius:4px 0 0 4px;padding:6px 2px 5px 3px}
i{display:block;height:100%;background:repeating-linear-gradient(transparent 0 2px,#4a4f60 2px 3px),linear-gradient(#2b2e38 0 38%,#e6cf5a 38%,#9fdc7a 65%,#62dcc8)}
`, '<i></i>');

define('writer-app', `
:host{display:flex;flex-direction:column;height:100vh;position:relative;overflow:hidden}
main{flex:1;display:flex;min-height:0}
.work{flex:1;display:flex;justify-content:center;align-items:flex-start;padding:14px 0 0 1px;overflow:hidden}
ime-bar,site-mark,level-meter{position:absolute;z-index:2}
ime-bar{right:0;bottom:91px}
site-mark{right:11px;bottom:8px}
level-meter{right:0;bottom:6px}
`, `<title-bar></title-bar><menu-bar></menu-bar><ribbon-bar></ribbon-bar>
<main><div class="work"><doc-page></doc-page></div><page-scroll></page-scroll><style-panel></style-panel><side-rail></side-rail></main>
<status-bar></status-bar><site-mark></site-mark><ime-bar></ime-bar><level-meter></level-meter>`);
</script>
</body>
</html>
